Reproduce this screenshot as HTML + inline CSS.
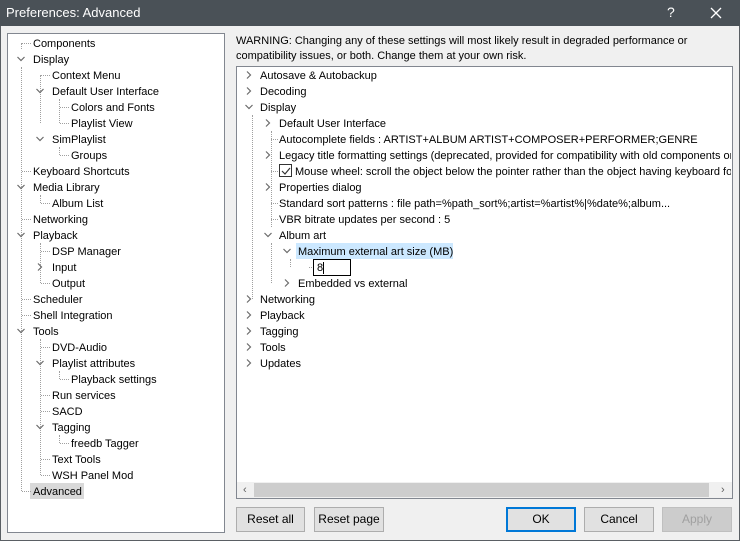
<!DOCTYPE html>
<html><head><meta charset="utf-8"><style>
*{margin:0;padding:0;box-sizing:border-box}
body{width:740px;height:541px;background:#f0f0f0;font-family:"Liberation Sans",sans-serif;font-size:11px;color:#000;position:relative;overflow:hidden}
.t{position:absolute;white-space:nowrap;line-height:16px;height:16px;z-index:2}
.title{position:absolute;left:0;top:0;width:740px;height:26px;background:#4a5157;color:#fff;font-size:13px}
.box{position:absolute;background:#fff;border:1px solid #828790}
.chev{position:absolute;width:10px;height:10px}
.btn{position:absolute;top:507px;height:25px;border:1px solid #adadad;background:#e1e1e1;text-align:center;line-height:23px;font-size:12px}
.vl{position:absolute;border-left:1px dotted #a0a0a0;width:0}
.hl{position:absolute;border-top:1px dotted #a0a0a0;height:0}
</style></head><body>
<div class="title"><span style="position:absolute;left:6px;top:5px">Preferences: Advanced</span>
<span style="position:absolute;left:667px;top:4px;font-size:14px">?</span>
<svg style="position:absolute;left:710px;top:7px" width="12" height="12"><path d="M1 1L11 11M11 1L1 11" stroke="#fff" stroke-width="1.3"/></svg></div>
<div style="position:absolute;left:0;top:26px;width:740px;height:515px;border:1px solid #5a5f64;border-top:none"></div>

<div class="box" style="left:7px;top:33px;width:218px;height:500px"></div>
<div class="box" style="left:236px;top:66px;width:497px;height:433px"></div>
<div style="position:absolute;left:237px;top:482px;width:495px;height:16px;background:#f0f0f0"></div>
<div style="position:absolute;left:254px;top:483px;width:455px;height:14px;background:#cdcdcd"></div>
<span class="t" style="left:243px;top:482px;font-size:11px;color:#606060">‹</span>
<span class="t" style="left:721px;top:482px;font-size:11px;color:#606060">›</span>

<div class="t" style="left:236px;top:34px;line-height:15px;height:30px;font-size:11px">WARNING: Changing any of these settings will most likely result in degraded performance or<br>compatibility issues, or both. Change them at your own risk.</div>

<div style="position:absolute;left:30px;top:483px;width:54px;height:16px;background:#d9d9d9"></div>
<div style="position:absolute;left:296px;top:243px;width:157px;height:16px;background:#cce8ff"></div>
<div style="position:absolute;left:313px;top:259px;width:38px;height:17px;border:1px solid #000;background:#fff;z-index:1"></div>
<div style="position:absolute;left:323px;top:262px;width:1px;height:12px;background:#000;z-index:3"></div>
<div style="position:absolute;left:279px;top:164px;width:13px;height:13px;border:1px solid #333;background:#fff;z-index:1"></div>
<svg style="position:absolute;left:281px;top:166px;z-index:2" width="10" height="10"><path d="M1 5L4 8L9 2" stroke="#333" stroke-width="1.2" fill="none"/></svg>

<div class="vl" style="left:21px;top:67px;height:424px"></div>
<div class="vl" style="left:40px;top:75px;height:48px"></div>
<div class="vl" style="left:40px;top:195px;height:8px"></div>
<div class="vl" style="left:40px;top:243px;height:40px"></div>
<div class="vl" style="left:40px;top:339px;height:136px"></div>
<div class="vl" style="left:59px;top:99px;height:24px"></div>
<div class="vl" style="left:59px;top:147px;height:8px"></div>
<div class="vl" style="left:59px;top:371px;height:8px"></div>
<div class="vl" style="left:59px;top:435px;height:8px"></div>
<div class="vl" style="left:21px;top:43px;height:6px"></div>
<div id="L"></div>
<div id="R"></div>
<div class="vl" style="left:252px;top:115px;height:184px"></div>
<div class="vl" style="left:271px;top:131px;height:96px"></div>
<div class="vl" style="left:271px;top:243px;height:40px"></div>
<div class="vl" style="left:290px;top:259px;height:8px"></div>

<script>
function chev(x,y,d){return '<svg class="chev" style="left:'+x+'px;top:'+(y-5)+'px" width="10" height="10"><path d="'+(d?'M1.5 3L5 6.5L8.5 3':'M3 1.5L6.5 5L3 8.5')+'" stroke="#6a6a6a" stroke-width="1.2" fill="none"/></svg>';}
var L=[[0,'Components',0],[0,'Display',2],[1,'Context Menu',0],[1,'Default User Interface',2],[2,'Colors and Fonts',0],[2,'Playlist View',0],[1,'SimPlaylist',2],[2,'Groups',0],[0,'Keyboard Shortcuts',0],[0,'Media Library',2],[1,'Album List',0],[0,'Networking',0],[0,'Playback',2],[1,'DSP Manager',0],[1,'Input',1],[1,'Output',0],[0,'Scheduler',0],[0,'Shell Integration',0],[0,'Tools',2],[1,'DVD-Audio',0],[1,'Playlist attributes',2],[2,'Playback settings',0],[1,'Run services',0],[1,'SACD',0],[1,'Tagging',2],[2,'freedb Tagger',0],[1,'Text Tools',0],[1,'WSH Panel Mod',0],[0,'Advanced',0]];
var h='';L.forEach(function(r,i){var y=43+i*16,x=33+r[0]*19;h+='<span class="t" style="left:'+x+'px;top:'+(y-7)+'px">'+r[1]+'</span>';if(r[2])h+=chev(x-17,y,r[2]==2);else h+='<div class="hl" style="left:'+(x-11)+'px;top:'+y+'px;width:9px"></div>';});
document.getElementById('L').innerHTML=h;
var R=[[0,'Autosave &amp; Autobackup',1],[0,'Decoding',1],[0,'Display',2],[1,'Default User Interface',1],[1,'Autocomplete fields : ARTIST+ALBUM ARTIST+COMPOSER+PERFORMER;GENRE',0],[1,'Legacy title formatting settings (deprecated, provided for compatibility with old components or',1],[1,'<span style="margin-left:16px">Mouse wheel: scroll the object below the pointer rather than the object having keyboard fo</span>',0],[1,'Properties dialog',1],[1,'Standard sort patterns : file path=%path_sort%;artist=%artist%|%date%;album...',0],[1,'VBR bitrate updates per second : 5',0],[1,'Album art',2],[2,'Maximum external art size (MB)',2],[3,'8',0],[2,'Embedded vs external',1],[0,'Networking',1],[0,'Playback',1],[0,'Tagging',1],[0,'Tools',1],[0,'Updates',1]];
h='';R.forEach(function(r,i){var y=75+i*16,x=260+r[0]*19;h+='<span class="t" style="left:'+x+'px;top:'+(y-7)+'px;max-width:'+(731-x)+'px;overflow:hidden">'+r[1]+'</span>';if(r[2])h+=chev(x-16,y,r[2]==2);else h+='<div class="hl" style="left:'+(x-8)+'px;top:'+y+'px;width:7px"></div>';});
document.getElementById('R').innerHTML=h;
</script>

<div class="btn" style="left:236px;width:69px">Reset all</div>
<div class="btn" style="left:314px;width:70px">Reset page</div>
<div class="btn" style="left:506px;width:70px;border:2px solid #0078d7;line-height:21px">OK</div>
<div class="btn" style="left:584px;width:70px">Cancel</div>
<div class="btn" style="left:662px;width:70px;color:#a0a0a0;border-color:#bfbfbf;background:#cccccc">Apply</div>
</body></html>
